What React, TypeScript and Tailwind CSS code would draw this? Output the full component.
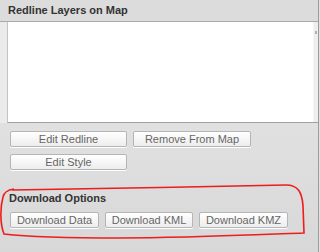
import React from "react";

const Btn = ({ label, w }: { label: string; w: string }) => (
  <button
    className={`${w} h-[16px] rounded-[2px] border border-[#b5b5b5] bg-gradient-to-b from-[#ffffff] to-[#ededed] text-[11px] leading-[14px] text-[#666666] text-center shadow-[0_1px_0_#ffffff]`}
  >
    {label}
  </button>
);

export default function App() {
  return (
    <div
      className="relative w-[320px] h-[252px] flex overflow-hidden"
      style={{ fontFamily: '"Liberation Sans", Arial, sans-serif' }}
    >
      <div className="w-[318px] h-full flex flex-col bg-gradient-to-b from-[#e9e9e9] to-[#d8d8d8]">
        <div className="h-[21px] shrink-0 bg-[#dcdcdc] pl-[8px] pt-[3px] text-[11px] font-bold leading-[14px] text-[#333333]">
          Redline Layers on Map
        </div>
        <div className="h-[1px] shrink-0 bg-[#a9a9a9]" />
        <div className="flex">
          <div className="w-[7px] bg-[#ebebeb]" />
          <div className="flex-1 h-[101px] bg-white border-l border-[#c4c4c4] border-b border-b-[#a0a0a0] flex justify-end">
            <div className="w-[5px] h-full bg-[#eeeeee] border-l border-[#f4f4f4] relative">
              <div className="absolute right-[1px] top-[9px] w-[2px] h-[3px] bg-[#b0b0b0]" />
            </div>
          </div>
        </div>
        <div className="flex flex-col pl-[10px] pt-[8px] gap-[7px]">
          <div className="flex gap-[6px]">
            <Btn label="Edit Redline" w="w-[117px]" />
            <Btn label="Remove From Map" w="w-[118px]" />
          </div>
          <div className="flex">
            <Btn label="Edit Style" w="w-[117px]" />
          </div>
        </div>
        <div className="pl-[9px] pt-[21px] text-[11px] font-bold leading-[14px] text-[#333333]">
          Download Options
        </div>
        <div className="flex pl-[10px] pt-[7px] gap-[6px]">
          <Btn label="Download Data" w="w-[89px]" />
          <Btn label="Download KML" w="w-[88px]" />
          <Btn label="Download KMZ" w="w-[89px]" />
        </div>
      </div>
      <div className="w-[1px] h-full bg-[#9c9c9c]" />
      <div className="w-[1px] h-full bg-[#e2e2e2]" />
      <svg
        className="absolute left-0 top-0 pointer-events-none"
        width="320"
        height="252"
        viewBox="0 0 320 252"
      >
        <path
          d="M 12 190 C 80 189, 200 187, 286 185 C 298 185, 302 192, 303 206 L 304 233 C 250 235, 180 238, 120 238 C 80 238, 30 237, 4 234 C 0 224, 0 208, 3 197 C 4 192, 7 190, 14 189"
          fill="none"
          stroke="#ee1c1c"
          strokeWidth="1.6"
        />
      </svg>
    </div>
  );
}
